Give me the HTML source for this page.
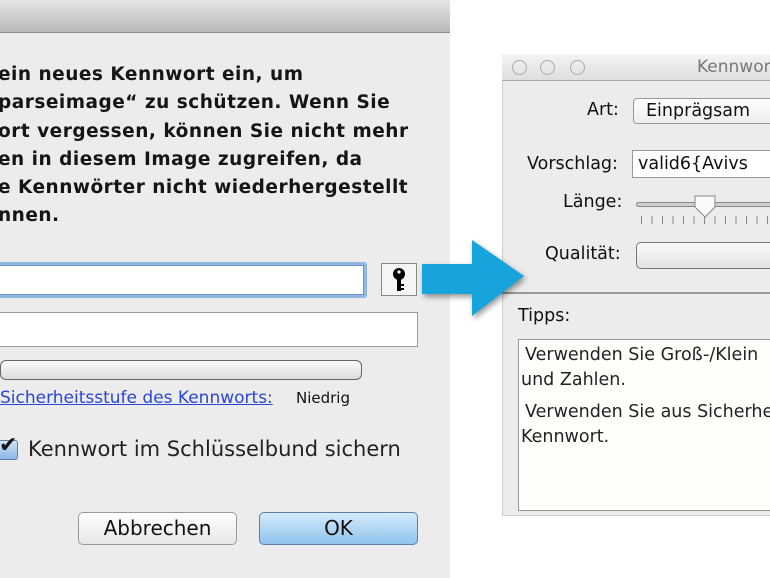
<!DOCTYPE html><html><head><meta charset="utf-8"><style>
*{margin:0;padding:0;box-sizing:border-box}
body{width:770px;height:578px;overflow:hidden;background:#fff;position:relative;font-family:"DejaVu Sans","Liberation Sans",sans-serif;color:#111}
.a{position:absolute}
</style></head><body>
<div class="a" style="left:0;top:0;width:450px;height:578px;background:#ececec"></div>
<div class="a" style="left:0;top:0;width:450px;height:33px;background:linear-gradient(#e6e6e6,#b9b9b9);border-bottom:1px solid #8a8a8a"></div>
<div class="a" style="left:-2px;top:61px;font-weight:bold;font-size:18.5px;letter-spacing:0.5px;line-height:28.3px;white-space:nowrap;color:#151515">ein neues Kennwort ein, um<br>parseimage“ zu schützen. Wenn Sie<br>ort vergessen, können Sie nicht mehr<br>en in diesem Image zugreifen, da<br>e Kennwörter nicht wiederhergestellt<br>nnen.</div>
<div class="a" style="left:-6px;top:262px;width:373px;height:36px;background:#fff;border:3px solid #8fb7e3;border-radius:3px;box-shadow:inset 0 0 0 1px #6e93c4"></div>
<div class="a" style="left:381px;top:263px;width:36px;height:33px;background:#f6f6f6;border:1px solid #888"></div>
<svg class="a" style="left:390px;top:267px" width="18" height="26" viewBox="0 0 18 26"><circle cx="9" cy="7" r="6" fill="#000"/><circle cx="9" cy="5" r="1.6" fill="#fff"/><rect x="7" y="11" width="4" height="13" fill="#000"/><rect x="11" y="17" width="3" height="2" fill="#000"/><rect x="11" y="21" width="3" height="2" fill="#000"/></svg>
<div class="a" style="left:-4px;top:312px;width:422px;height:35px;background:#fff;border:1px solid #999"></div>
<div class="a" style="left:0;top:360px;width:362px;height:20px;background:linear-gradient(#fafafa,#dcdcdc);border:1.5px solid #666;border-radius:6px"></div>
<div class="a" style="left:0;top:388px;font-size:17px;color:#2a45d8;text-decoration:underline">Sicherheitsstufe des Kennworts:</div>
<div class="a" style="left:296px;top:389px;font-size:15px">Niedrig</div>
<div class="a" style="left:-2px;top:440px;width:20px;height:20px;background:linear-gradient(#cfe3f7,#8cb8e6);border:1px solid #5f80a8;border-radius:3px"></div>
<div class="a" style="left:-1px;top:433px;font-size:22px;font-weight:bold;color:#111">✔</div>
<div class="a" style="left:28px;top:437px;font-size:21px;white-space:nowrap;color:#222">Kennwort im Schlüsselbund sichern</div>
<div class="a" style="left:78px;top:512px;width:159px;height:33px;background:linear-gradient(#fff,#e6e6e6);border:1px solid #999;border-radius:5px;font-size:20px;text-align:center;line-height:31px">Abbrechen</div>
<div class="a" style="left:259px;top:512px;width:159px;height:33px;background:linear-gradient(#d6ebfb,#8fc3ec);border:1px solid #5a7fa8;border-radius:5px;font-size:20px;text-align:center;line-height:31px">OK</div>

<div class="a" style="left:502px;top:54px;width:268px;height:462px;background:#ececec;border:1px solid #ccc;border-right:none"></div>
<div class="a" style="left:502px;top:54px;width:268px;height:27px;background:linear-gradient(#f4f4f4,#dedede);border-bottom:1px solid #aaa"></div>
<div class="a" style="left:512px;top:60px;width:15px;height:15px;border:1px solid #aaa;border-radius:50%"></div>
<div class="a" style="left:540px;top:60px;width:15px;height:15px;border:1px solid #aaa;border-radius:50%"></div>
<div class="a" style="left:570px;top:60px;width:15px;height:15px;border:1px solid #aaa;border-radius:50%"></div>
<div class="a" style="left:697px;top:57px;font-size:17px;color:#777">Kennwort</div>
<div class="a" style="left:587px;top:100px;font-size:17.5px">Art:</div>
<div class="a" style="left:633px;top:98px;width:150px;height:26px;background:linear-gradient(#fff,#eee);border:1px solid #999;border-radius:4px;font-size:17.5px;padding-left:12px;line-height:24px">Einprägsam</div>
<div class="a" style="left:527px;top:154px;font-size:17.5px">Vorschlag:</div>
<div class="a" style="left:632px;top:150px;width:150px;height:28px;background:#fff;border:1px solid #999;font-size:17.5px;padding-left:5px;line-height:26px">valid6{Avivs</div>
<div class="a" style="left:563px;top:192px;font-size:17.5px">Länge:</div>
<div class="a" style="left:636px;top:202px;width:140px;height:5px;background:#cfcfcf;border:1px solid #888;border-radius:3px"></div>
<svg class="a" style="left:692px;top:194px" width="28" height="26"><path d="M3 2h20v11l-10 10-10-10z" fill="#fafafa" stroke="#888"/></svg>
<div class="a" style="left:641px;top:216px;width:130px;height:8px;background:repeating-linear-gradient(90deg,#888 0 1px,transparent 1px 10.5px)"></div>
<div class="a" style="left:545px;top:244px;font-size:17.5px">Qualität:</div>
<div class="a" style="left:636px;top:242px;width:150px;height:27px;background:linear-gradient(#fafafa,#e2e2e2);border:1px solid #777;border-radius:5px"></div>
<div class="a" style="left:502px;top:292px;width:268px;height:2px;background:#999"></div>
<div class="a" style="left:518px;top:306px;font-size:17.5px">Tipps:</div>
<div class="a" style="left:518px;top:339px;width:260px;height:172px;background:#fffefb;border:1px solid #999;font-size:17.5px;line-height:25px;padding:3px 0 0 6px;white-space:nowrap;color:#222"> Verwenden Sie Groß-/Klein<br><span style="margin-left:-4px">und Zahlen.</span><div style="height:7px"></div> Verwenden Sie aus Sicherhe<br><span style="margin-left:-4px">Kennwort.</span></div>

<svg class="a" style="left:0;top:0" width="770" height="578"><polygon points="422,264 472,264 472,240 524,276 472,316 472,294 422,294" fill="#17a3dc" style="filter:drop-shadow(2px 3px 3px rgba(0,0,0,.4))"/></svg>
</body></html>
